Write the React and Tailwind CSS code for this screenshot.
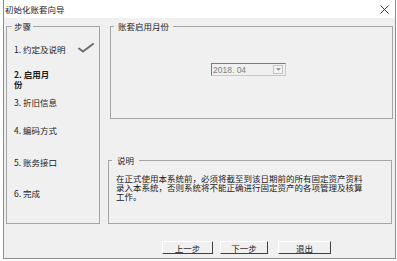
import React from "react";

const font = { fontFamily: '"Noto Sans CJK SC", "Liberation Sans", sans-serif' };

function Check() {
  return (
    <svg width="16" height="10" viewBox="0 0 16 10" className="ml-[12px] mt-[-2px]">
      <path d="M1 5.5 L5 8.5 L15 1" stroke="#6e6e6e" strokeWidth="2" fill="none" strokeLinecap="round" strokeLinejoin="round" />
    </svg>
  );
}

export default function App() {
  return (
    <div className="w-[397px] h-[261px] bg-white text-[8.5px] leading-[10px] text-[#1c1c1c]" style={font}>
      <div className="ml-[3px] w-[393px] h-[259px] border-x border-b border-[#8c8c8c] flex flex-col">
        {/* title bar */}
        <div className="h-[18px] bg-white flex items-center justify-between pl-[1px] pr-[6px]">
          <span className="text-[8.5px] text-[#222]">初始化账套向导</span>
          <svg width="9" height="9" viewBox="0 0 9 9">
            <path d="M0.5 0.5 L8.5 8.5 M8.5 0.5 L0.5 8.5" stroke="#333" strokeWidth="1" />
          </svg>
        </div>
        {/* body */}
        <div className="flex-1 bg-[#f0f0f0] flex flex-col">
          <div className="flex pt-[8px] pl-[2px]">
            {/* steps */}
            <div className="relative w-[94px] h-[198px] border border-[#a5a5a5]">
              <span className="absolute left-[5px] top-[-6px] px-[2px] bg-[#f0f0f0]">步骤</span>
              <div className="flex flex-col pl-[7px] pt-[17px]">
                <div className="flex items-center">
                  <span>1. 约定及说明</span>
                  <Check />
                </div>
                <div className="mt-[15px] font-bold">2. 启用月<br />份</div>
                <div className="mt-[8px]">3. 折旧信息</div>
                <div className="mt-[18px]">4. 编码方式</div>
                <div className="mt-[22px]">5. 账务接口</div>
                <div className="mt-[21px]">6. 完成</div>
              </div>
            </div>
            {/* right column */}
            <div className="flex flex-col ml-[10px]">
              <div className="relative w-[283px] h-[93px] border border-[#a5a5a5]">
                <span className="absolute left-[3px] top-[-6px] px-[4px] bg-[#f0f0f0]">账套启用月份</span>
                <div className="mt-[36px] ml-[100px] w-[75px] h-[13px] flex items-center border border-t-[#7a7a7a] border-l-[#7a7a7a] border-r-[#c8c8c8] border-b-[#c8c8c8] bg-[#f0f0f0]">
                  <span className="flex-1 pl-[1px] text-[#808080]" style={{ fontFamily: '"Liberation Sans", sans-serif' }}>2018. 04</span>
                  <div className="w-[10px] h-[9px] mr-[2px] flex items-center justify-center border border-[#c4c4c4] bg-[#f4f4f4]">
                    <svg width="5" height="3" viewBox="0 0 5 3">
                      <path d="M0 0 L5 0 L2.5 3 Z" fill="#9a9a9a" />
                    </svg>
                  </div>
                </div>
              </div>
              <div className="relative mt-[41px] -ml-[2px] w-[284px] h-[64px] border border-[#a5a5a5]">
                <span className="absolute left-[3px] top-[-6px] px-[5px] bg-[#f0f0f0]">说明</span>
                <div className="pt-[13px] pl-[7px] leading-[9px] whitespace-nowrap">
                  在正式使用本系统前，必须将截至到该日期前的所有固定资产资料<br />
                  录入本系统，否则系统将不能正确进行固定资产的各项管理及核算<br />
                  工作。
                </div>
              </div>
            </div>
          </div>
          {/* buttons */}
          <div className="flex mt-[17px] pl-[158px]">
            <button className="w-[51px] h-[13px] flex items-center justify-center bg-[#f0f0f0] border border-t-white border-l-white border-r-[#404040] border-b-[#404040] leading-[10px]">上一步</button>
            <button className="ml-[7px] w-[48px] h-[13px] flex items-center justify-center bg-[#f0f0f0] border border-t-white border-l-white border-r-[#404040] border-b-[#404040] leading-[10px]">下一步</button>
            <button className="ml-[10px] w-[53px] h-[13px] flex items-center justify-center bg-[#f0f0f0] border border-t-white border-l-white border-r-[#404040] border-b-[#404040] leading-[10px]">退出</button>
          </div>
        </div>
      </div>
    </div>
  );
}
